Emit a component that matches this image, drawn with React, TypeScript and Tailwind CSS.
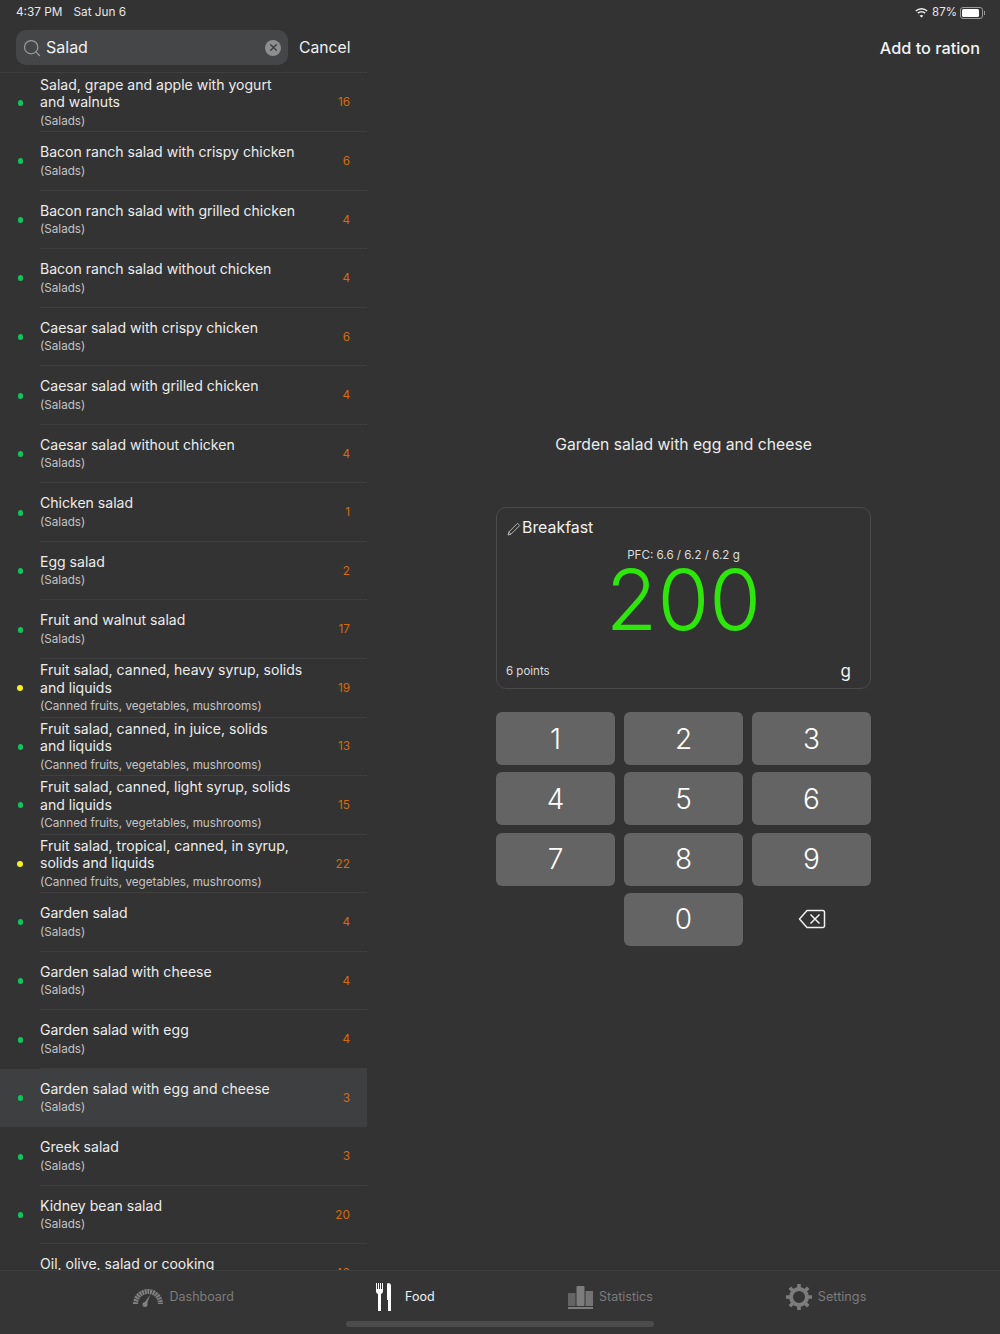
import { Search, X } from "lucide-react";

const foods = [
  { name: ["Salad, grape and apple with yogurt", "and walnuts"], group: "(Salads)", pts: 16, dot: "green" },
  { name: ["Bacon ranch salad with crispy chicken"], group: "(Salads)", pts: 6, dot: "green" },
  { name: ["Bacon ranch salad with grilled chicken"], group: "(Salads)", pts: 4, dot: "green" },
  { name: ["Bacon ranch salad without chicken"], group: "(Salads)", pts: 4, dot: "green" },
  { name: ["Caesar salad with crispy chicken"], group: "(Salads)", pts: 6, dot: "green" },
  { name: ["Caesar salad with grilled chicken"], group: "(Salads)", pts: 4, dot: "green" },
  { name: ["Caesar salad without chicken"], group: "(Salads)", pts: 4, dot: "green" },
  { name: ["Chicken salad"], group: "(Salads)", pts: 1, dot: "green" },
  { name: ["Egg salad"], group: "(Salads)", pts: 2, dot: "green" },
  { name: ["Fruit and walnut salad"], group: "(Salads)", pts: 17, dot: "green" },
  { name: ["Fruit salad, canned, heavy syrup, solids", "and liquids"], group: "(Canned fruits, vegetables, mushrooms)", pts: 19, dot: "yellow" },
  { name: ["Fruit salad, canned, in juice, solids", "and liquids"], group: "(Canned fruits, vegetables, mushrooms)", pts: 13, dot: "green" },
  { name: ["Fruit salad, canned, light syrup, solids", "and liquids"], group: "(Canned fruits, vegetables, mushrooms)", pts: 15, dot: "green" },
  { name: ["Fruit salad, tropical, canned, in syrup,", "solids and liquids"], group: "(Canned fruits, vegetables, mushrooms)", pts: 22, dot: "yellow" },
  { name: ["Garden salad"], group: "(Salads)", pts: 4, dot: "green" },
  { name: ["Garden salad with cheese"], group: "(Salads)", pts: 4, dot: "green" },
  { name: ["Garden salad with egg"], group: "(Salads)", pts: 4, dot: "green" },
  { name: ["Garden salad with egg and cheese"], group: "(Salads)", pts: 3, dot: "green", selected: true },
  { name: ["Greek salad"], group: "(Salads)", pts: 3, dot: "green" },
  { name: ["Kidney bean salad"], group: "(Salads)", pts: 20, dot: "green" },
  { name: ["Oil, olive, salad or cooking"], group: "(Oils)", pts: 40, dot: "green" },
];

const keys = ["1", "2", "3", "4", "5", "6", "7", "8", "9"];

const FoodRow = ({ food }: { food: (typeof foods)[number] }) => (
  <div className={`flex h-[58.56px] shrink-0 items-center pl-[17px] ${food.selected ? "bg-[#3e3f41]" : ""}`}>
    <div
      className={
        food.dot === "yellow"
          ? "h-[6px] w-[6px] shrink-0 rounded-full bg-[#f4f41c]"
          : "ml-[0.5px] mr-[0.5px] h-[6px] w-[5px] shrink-0 rounded-full bg-[#0cc65a]"
      }
    />
    <div className="ml-[17px] flex h-full flex-1 items-center border-b border-[#3f3f3f] pr-[17px]">
      <div className="flex-1">
        {food.name.map((line) => (
          <div key={line} className="text-[14.06px] leading-[17.5px] text-[#ececec]">
            {line}
          </div>
        ))}
        <div className="mt-[2px] text-[11.7px] leading-[16px] text-[#c4c4c4]">{food.group}</div>
      </div>
      <div className="pt-[2px] text-[11.8px] text-[#d26c0e]">{food.pts}</div>
    </div>
  </div>
);

const Gauge = () => (
  <svg width="32" height="20" viewBox="0 0 32 20" fill="none">
    <path d="M3.500 17 A12.500 12.500 0 0 1 28.500 17" stroke="#808080" strokeWidth="5" strokeDasharray="2 0.7" />
    <path d="M11.500 17 L18 8 L14.500 18.500 Z" fill="#808080" />
    <circle cx="13" cy="17.500" r="2.500" fill="#808080" />
  </svg>
);

const Cutlery = () => (
  <svg width="17" height="28" viewBox="0 0 17 28" fill="#ffffff">
    <path d="M1 0h1v6h1V0h1v6h1V0h1v6h1V0h1v8c0 1.500-.8 2.500-2 3v17H3V11C1.800 10.500 1 9.500 1 8z" />
    <path d="M13 0c1.500 0 3 .8 3 2.500V28h-3V17h-1V2c0-1 .3-2 1-2z" />
  </svg>
);

const Bars = () => (
  <svg width="25" height="23" viewBox="0 0 25 23">
    <rect x="0" y="7" width="7.500" height="13" fill="#646464" />
    <rect x="8.500" y="0" width="8" height="20" rx="1" fill="#7c7c7c" />
    <rect x="17.500" y="5" width="7.500" height="15" fill="#747474" />
    <rect x="0" y="21" width="25" height="2" fill="#7c7c7c" />
  </svg>
);

const Gear = () => (
  <svg width="26" height="26" viewBox="0 0 26 26" fill="none">
    <circle cx="13" cy="13" r="8" stroke="#7c7c7c" strokeWidth="4" />
    <path
      d="M13 0v4M13 22v4M0 13h4M22 13h4M3.800 3.800l2.800 2.800M19.400 19.400l2.800 2.800M22.200 3.800l-2.800 2.800M6.600 19.400l-2.800 2.800"
      stroke="#7c7c7c"
      strokeWidth="3.600"
    />
  </svg>
);

export default function App() {
  return (
    <div className="flex h-[1334px] w-[1000px] flex-col overflow-hidden bg-[#333333] font-['Inter',sans-serif]">
      <div className="flex min-h-0 flex-1">
        <div className="flex w-[367px] shrink-0 flex-col overflow-hidden">
          <div className="flex h-[24px] shrink-0 items-center gap-[11px] pl-4 pt-[1px] text-[11.8px] text-[#e6e6e6]">
            <span>4:37 PM</span>
            <span>Sat Jun 6</span>
          </div>
          <div className="flex h-[49px] shrink-0 items-start border-b border-[#3f3f3f] pl-4 pt-[6px]">
            <div className="flex h-[35px] w-[272px] items-center rounded-[10px] bg-[#454648] pl-[6px] pr-[7px]">
              <Search size={20} strokeWidth={1.500} className="text-[#9a9a9a]" />
              <span className="ml-[4px] mb-[1px] flex-1 text-[16px] text-[#f0f0f0]">Salad</span>
              <div className="flex h-4 w-4 items-center justify-center rounded-full bg-[#8e8e8e]">
                <X size={11} strokeWidth={3} className="text-[#3e3e3e]" />
              </div>
            </div>
            <span className="ml-[11px] mt-[6px] text-[15.7px] leading-[24px] text-[#f0f0f0]">Cancel</span>
          </div>
          <div className="flex flex-col pt-[0.5px]">
            {foods.map((food) => (
              <FoodRow key={food.name[0]} food={food} />
            ))}
          </div>
        </div>

        <div className="flex flex-1 flex-col items-center">
          <div className="flex h-[24px] w-full shrink-0 items-center justify-end pr-[15px] pt-[1px] text-[11.5px] text-[#e6e6e6]">
            <svg width="15" height="11" viewBox="0 0 15 11" fill="#f0f0f0">
              <path d="M7.500 2.500c2 0 3.800.8 5.200 2.100l1-1.100A9 9 0 0 0 7.500 1a9 9 0 0 0-6.200 2.500l1 1.100a7.500 7.500 0 0 1 5.200-2.100z" />
              <path d="M7.500 5.500c1.200 0 2.300.5 3.100 1.200l1-1.100a6 6 0 0 0-8.200 0l1 1.100c.8-.7 1.900-1.200 3.100-1.200z" />
              <path d="M7.500 8c-.7 0-1.300.2-1.800.7l1.800 1.900 1.800-1.900c-.5-.5-1.100-.7-1.800-.7z" />
            </svg>
            <span className="ml-[3px]">87%</span>
            <div className="ml-[3px] flex h-[12px] w-[23px] items-center rounded-[3px] border border-[#9a9a9a] p-[1px]">
              <div className="h-full w-[87%] rounded-[1.500px] bg-white" />
            </div>
            <div className="ml-[1px] h-[4px] w-[1px] bg-[#9a9a9a]" />
          </div>
          <div className="flex h-[49px] w-full shrink-0 items-center justify-end pr-5 text-[16.3px] font-medium text-[#f2f2f2]">
            Add to ration
          </div>

          <div className="mt-[360px] text-[15.7px] leading-[24px] text-[#ececec]">Garden salad with egg and cheese</div>

          <div className="mt-[50px] flex h-[182px] w-[375px] flex-col rounded-[10px] border border-[#4a4a4a] px-[9px]">
            <div className="mt-[9px] flex items-center text-[15.9px] leading-[22px] text-[#f0f0f0]">
              <svg width="14" height="14" viewBox="0 0 14 14" fill="none" stroke="#b4b4b4" strokeWidth="1" className="ml-[1px] mr-[1px] mt-[1px]">
                <path d="M1 13l.8-3L10.500 1.300l2.200 2.200L4 12.200z" />
                <path d="M1.800 10l2.200 2.200" />
              </svg>
              <span>Breakfast</span>
            </div>
            <div className="mt-[9px] text-center text-[11.6px] leading-[14px] text-[#dcdcdc]">PFC: 6.6 / 6.2 / 6.2 g</div>
            <div className="mt-[-4px] text-center text-[84px] font-[350] leading-[84px] text-[#2ee60b]">200</div>
            <div className="mt-[19px] flex items-center justify-between pr-[10px] leading-[20px]">
              <span className="text-[11.5px] text-[#dcdcdc]">6 points</span>
              <span className="text-[17px] text-[#f0f0f0]">g</span>
            </div>
          </div>

          <div className="mt-[23px] grid w-[375px] grid-cols-3 gap-x-[9px] gap-y-[7.25px]">
            {keys.map((k) => (
              <div key={k} className="flex h-[53px] items-center justify-center rounded-[6px] bg-[#646464] text-[28px] font-light text-white">
                {k}
              </div>
            ))}
            <div />
            <div className="flex h-[53px] items-center justify-center rounded-[6px] bg-[#646464] text-[28px] font-light text-white">
              0
            </div>
            <div className="flex h-[53px] items-center justify-center">
              <svg width="28" height="20" viewBox="0 0 28 20" fill="none" stroke="#f0f0f0" strokeWidth="1.500" strokeLinejoin="round">
                <path d="M9 1.500h16a1.500 1.500 0 0 1 1.500 1.500v14a1.500 1.500 0 0 1-1.500 1.500H9L1.500 10z" />
                <path d="M12.500 5.500l9 9M21.500 5.500l-9 9" />
              </svg>
            </div>
          </div>
        </div>
      </div>

      <div className="relative flex h-[64px] shrink-0 justify-center border-t border-[#3d3d3d] bg-[#353535]">
        <div className="flex w-[1000px] pt-[10px]">
          <div className="flex h-[32px] w-[322px] items-center justify-end gap-[6px] pr-[88px] text-[12.5px] text-[#7c7c7c]">
            <Gauge />
            <span>Dashboard</span>
          </div>
          <div className="flex h-[32px] w-[113px] items-center gap-[13px] pl-[53px] text-[12.5px] text-[#f0f0f0]">
            <Cutlery />
            <span>Food</span>
          </div>
          <div className="flex h-[32px] items-center gap-[6px] pl-[133px] text-[12.5px] text-[#7c7c7c]">
            <Bars />
            <span>Statistics</span>
          </div>
          <div className="flex h-[32px] items-center gap-[6px] pl-[133px] text-[12.7px] text-[#7c7c7c]">
            <Gear />
            <span>Settings</span>
          </div>
        </div>
        <div className="absolute bottom-[7px] left-[346px] h-[6px] w-[308px] rounded-full bg-[#4c4c4c]" />
      </div>
    </div>
  );
}
